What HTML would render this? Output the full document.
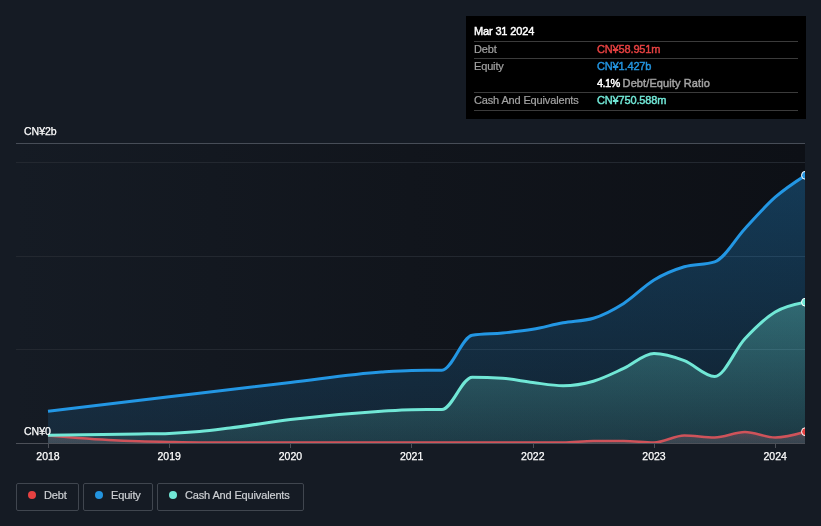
<!DOCTYPE html>
<html><head><meta charset="utf-8"><title>Debt to Equity History</title>
<style>
html,body{margin:0;padding:0;}
body{width:821px;height:526px;background:#151b24;overflow:hidden;position:relative;font-family:"Liberation Sans",sans-serif;}
svg{position:absolute;left:0;top:0;}
svg,.tip,.legend{will-change:transform;}
.ax{font-family:"Liberation Sans",sans-serif;font-size:10.5px;fill:#ffffff;font-weight:400;stroke:#ffffff;stroke-width:0.25px;}
.tip{position:absolute;left:466px;top:16px;width:340px;height:103px;background:#000;}
.tip div{position:absolute;white-space:nowrap;font-size:11px;line-height:14px;letter-spacing:-0.15px;}
.tip .sep{left:8px;width:324px;height:1px;background:#3b3b3b;}
.lab{color:#a3a3a3;left:8px;-webkit-text-stroke:0.2px;}
.val{left:131px;font-weight:400;-webkit-text-stroke:0.45px;}
.legend{position:absolute;top:483px;height:26px;border:1px solid #40464f;border-radius:2px;box-sizing:content-box;}
.legend i{position:absolute;left:11px;top:7px;width:8px;height:8px;border-radius:50%;}
.legend span{position:absolute;left:27px;top:4px;font-size:11px;line-height:14px;color:#cdd0d4;-webkit-text-stroke:0.2px;white-space:nowrap;letter-spacing:-0.15px;}
</style></head><body>
<svg width="821" height="526" viewBox="0 0 821 526">
<defs>
<linearGradient id="bg" x1="0" x2="1" y1="0" y2="0"><stop offset="0" stop-color="#151b24"/><stop offset="0.5" stop-color="#11151c"/><stop offset="1" stop-color="#0d1016"/></linearGradient>
<linearGradient id="ge" gradientUnits="userSpaceOnUse" x1="0" x2="0" y1="175" y2="443"><stop offset="0" stop-color="#2394df" stop-opacity="0.32"/><stop offset="1" stop-color="#2394df" stop-opacity="0.12"/></linearGradient>
<linearGradient id="gc" gradientUnits="userSpaceOnUse" x1="0" x2="0" y1="302" y2="443"><stop offset="0" stop-color="#71e7d6" stop-opacity="0.32"/><stop offset="1" stop-color="#71e7d6" stop-opacity="0.12"/></linearGradient>
<linearGradient id="gd" gradientUnits="userSpaceOnUse" x1="0" x2="0" y1="431" y2="443"><stop offset="0" stop-color="#d8606c" stop-opacity="0.3"/><stop offset="1" stop-color="#b0808c" stop-opacity="0.18"/></linearGradient>
<clipPath id="cp"><rect x="16" y="143" width="789" height="301"/></clipPath>
</defs>
<rect x="16" y="143" width="789" height="300" fill="url(#bg)"/>
<rect x="16" y="143" width="789" height="1" fill="#474d57"/>
<rect x="16" y="162" width="789" height="1" fill="#232830"/>
<rect x="16" y="256" width="789" height="1" fill="#232830"/>
<rect x="16" y="349" width="789" height="1" fill="#232830"/>
<g clip-path="url(#cp)">
<path d="M48.00,411.20C88.40,406.39,128.80,401.58,169.20,396.80C209.60,392.02,250.00,387.21,290.40,382.50C320.70,378.97,351.00,374.08,381.30,372.00C391.40,371.31,401.50,370.53,411.60,370.40C421.70,370.27,431.80,370.33,441.90,370.20C452.00,370.07,462.10,336.67,472.20,335.20C482.30,333.73,492.40,333.98,502.50,333.00C512.60,332.02,522.70,331.02,532.80,329.30C542.90,327.58,553.00,324.55,563.10,322.70C573.20,320.85,583.30,321.20,593.40,318.20C603.50,315.20,613.60,309.77,623.70,303.40C633.80,297.03,643.90,286.10,654.00,280.00C664.10,273.90,674.20,269.82,684.30,266.80C694.40,263.78,704.50,265.17,714.60,261.90C724.70,258.63,734.80,239.48,744.90,228.70C755.00,217.92,765.10,206.10,775.20,197.20C785.30,188.30,795.40,181.80,805.50,175.30L805.50,443L48.00,443Z" fill="url(#ge)"/>
<path d="M48.00,435.20C78.30,434.88,108.60,434.55,138.90,434.00C149.00,433.82,159.10,433.80,169.20,433.40C179.30,433.00,189.40,432.40,199.50,431.50C209.60,430.60,219.70,429.24,229.80,428.00C250.00,425.51,270.20,422.02,290.40,419.60C320.70,415.97,351.00,413.19,381.30,411.30C391.40,410.67,401.50,409.83,411.60,409.70C421.70,409.57,431.80,409.63,441.90,409.50C452.00,409.37,462.10,377.20,472.20,377.20C482.30,377.20,492.40,377.57,502.50,378.30C512.60,379.03,522.70,381.27,532.80,382.50C542.90,383.73,553.00,385.70,563.10,385.70C573.20,385.70,583.30,384.08,593.40,381.20C603.50,378.32,613.60,373.02,623.70,368.40C633.80,363.78,643.90,353.50,654.00,353.50C664.10,353.50,674.20,356.78,684.30,360.60C694.40,364.42,704.50,376.40,714.60,376.40C724.70,376.40,734.80,349.43,744.90,338.70C755.00,327.97,765.10,318.08,775.20,312.00C785.30,305.92,795.40,304.06,805.50,302.20L805.50,443L48.00,443Z" fill="url(#gc)"/>
<path d="M48.00,435.50C58.10,436.38,68.20,437.25,78.30,438.00C88.40,438.75,98.50,439.45,108.60,440.00C118.70,440.55,128.80,440.97,138.90,441.30C149.00,441.63,159.10,441.82,169.20,442.00C179.30,442.18,189.40,442.40,199.50,442.40C320.70,442.40,441.90,442.40,563.10,442.40C573.20,442.40,583.30,441.00,593.40,441.00C603.50,441.00,613.60,441.00,623.70,441.00C633.80,441.00,643.90,442.50,654.00,442.50C664.10,442.50,674.20,435.40,684.30,435.40C694.40,435.40,704.50,437.50,714.60,437.50C724.70,437.50,734.80,432.00,744.90,432.00C755.00,432.00,765.10,437.50,775.20,437.50C785.30,437.50,795.40,434.60,805.50,431.70L805.50,443L48.00,443Z" fill="url(#gd)"/>
<path d="M48.00,411.20C88.40,406.39,128.80,401.58,169.20,396.80C209.60,392.02,250.00,387.21,290.40,382.50C320.70,378.97,351.00,374.08,381.30,372.00C391.40,371.31,401.50,370.53,411.60,370.40C421.70,370.27,431.80,370.33,441.90,370.20C452.00,370.07,462.10,336.67,472.20,335.20C482.30,333.73,492.40,333.98,502.50,333.00C512.60,332.02,522.70,331.02,532.80,329.30C542.90,327.58,553.00,324.55,563.10,322.70C573.20,320.85,583.30,321.20,593.40,318.20C603.50,315.20,613.60,309.77,623.70,303.40C633.80,297.03,643.90,286.10,654.00,280.00C664.10,273.90,674.20,269.82,684.30,266.80C694.40,263.78,704.50,265.17,714.60,261.90C724.70,258.63,734.80,239.48,744.90,228.70C755.00,217.92,765.10,206.10,775.20,197.20C785.30,188.30,795.40,181.80,805.50,175.30" fill="none" stroke="#2397e4" stroke-width="3" stroke-linejoin="round"/>
<path d="M48.00,435.50C58.10,436.38,68.20,437.25,78.30,438.00C88.40,438.75,98.50,439.45,108.60,440.00C118.70,440.55,128.80,440.97,138.90,441.30C149.00,441.63,159.10,441.82,169.20,442.00C179.30,442.18,189.40,442.40,199.50,442.40C320.70,442.40,441.90,442.40,563.10,442.40C573.20,442.40,583.30,441.00,593.40,441.00C603.50,441.00,613.60,441.00,623.70,441.00C633.80,441.00,643.90,442.50,654.00,442.50C664.10,442.50,674.20,435.40,684.30,435.40C694.40,435.40,704.50,437.50,714.60,437.50C724.70,437.50,734.80,432.00,744.90,432.00C755.00,432.00,765.10,437.50,775.20,437.50C785.30,437.50,795.40,434.60,805.50,431.70" fill="none" stroke="#cf535a" stroke-width="2.5" stroke-linejoin="round"/>
<path d="M48.00,435.20C78.30,434.88,108.60,434.55,138.90,434.00C149.00,433.82,159.10,433.80,169.20,433.40C179.30,433.00,189.40,432.40,199.50,431.50C209.60,430.60,219.70,429.24,229.80,428.00C250.00,425.51,270.20,422.02,290.40,419.60C320.70,415.97,351.00,413.19,381.30,411.30C391.40,410.67,401.50,409.83,411.60,409.70C421.70,409.57,431.80,409.63,441.90,409.50C452.00,409.37,462.10,377.20,472.20,377.20C482.30,377.20,492.40,377.57,502.50,378.30C512.60,379.03,522.70,381.27,532.80,382.50C542.90,383.73,553.00,385.70,563.10,385.70C573.20,385.70,583.30,384.08,593.40,381.20C603.50,378.32,613.60,373.02,623.70,368.40C633.80,363.78,643.90,353.50,654.00,353.50C664.10,353.50,674.20,356.78,684.30,360.60C694.40,364.42,704.50,376.40,714.60,376.40C724.70,376.40,734.80,349.43,744.90,338.70C755.00,327.97,765.10,318.08,775.20,312.00C785.30,305.92,795.40,304.06,805.50,302.20" fill="none" stroke="#71e7d6" stroke-width="3" stroke-linejoin="round"/>
<circle cx="805.5" cy="175.3" r="4" fill="#2394df" stroke="#fff" stroke-width="1"/>
<circle cx="805.5" cy="302.2" r="4" fill="#71e7d6" stroke="#fff" stroke-width="1"/>
<circle cx="805.5" cy="431.7" r="4" fill="#e64141" stroke="#fff" stroke-width="1"/>
</g>
<rect x="16" y="443" width="789" height="1" fill="#4c5058"/>
<rect x="48" y="443" width="1" height="5" fill="#4c5058"/><rect x="169" y="443" width="1" height="5" fill="#4c5058"/><rect x="290" y="443" width="1" height="5" fill="#4c5058"/><rect x="411" y="443" width="1" height="5" fill="#4c5058"/><rect x="533" y="443" width="1" height="5" fill="#4c5058"/><rect x="654" y="443" width="1" height="5" fill="#4c5058"/><rect x="775" y="443" width="1" height="5" fill="#4c5058"/>
<text x="48.0" y="459.5" text-anchor="middle" class="ax">2018</text><text x="169.2" y="459.5" text-anchor="middle" class="ax">2019</text><text x="290.4" y="459.5" text-anchor="middle" class="ax">2020</text><text x="411.6" y="459.5" text-anchor="middle" class="ax">2021</text><text x="532.8" y="459.5" text-anchor="middle" class="ax">2022</text><text x="654.0" y="459.5" text-anchor="middle" class="ax">2023</text><text x="775.2" y="459.5" text-anchor="middle" class="ax">2024</text>
<text x="24" y="134.5" class="ax">CN¥2b</text>
<text x="24" y="434.5" class="ax">CN¥0</text>
</svg>
<div class="tip">
<div style="left:8px;top:8px;color:#fff;-webkit-text-stroke:0.45px #fff;">Mar 31 2024</div>
<div class="sep" style="top:25px"></div>
<div class="lab" style="top:26px">Debt</div><div class="val" style="top:26px;color:#e64141">CN¥58.951m</div>
<div class="sep" style="top:42px"></div>
<div class="lab" style="top:43px">Equity</div><div class="val" style="top:43px;color:#2394df">CN¥1.427b</div>
<div class="val" style="top:60px;color:#fff"><span style="letter-spacing:-0.6px">4.1%</span> <span style="color:#a3a3a3;letter-spacing:0.1px">Debt/Equity Ratio</span></div>
<div class="sep" style="top:76px"></div>
<div class="lab" style="top:77px">Cash And Equivalents</div><div class="val" style="top:77px;color:#71e7d6">CN¥750.588m</div>
<div class="sep" style="top:94px"></div>
</div>
<div class="legend" style="left:16px;width:61px"><i style="background:#e64141"></i><span>Debt</span></div>
<div class="legend" style="left:83px;width:68px"><i style="background:#2394df"></i><span>Equity</span></div>
<div class="legend" style="left:157px;width:145px"><i style="background:#71e7d6"></i><span>Cash And Equivalents</span></div>
</body></html>
